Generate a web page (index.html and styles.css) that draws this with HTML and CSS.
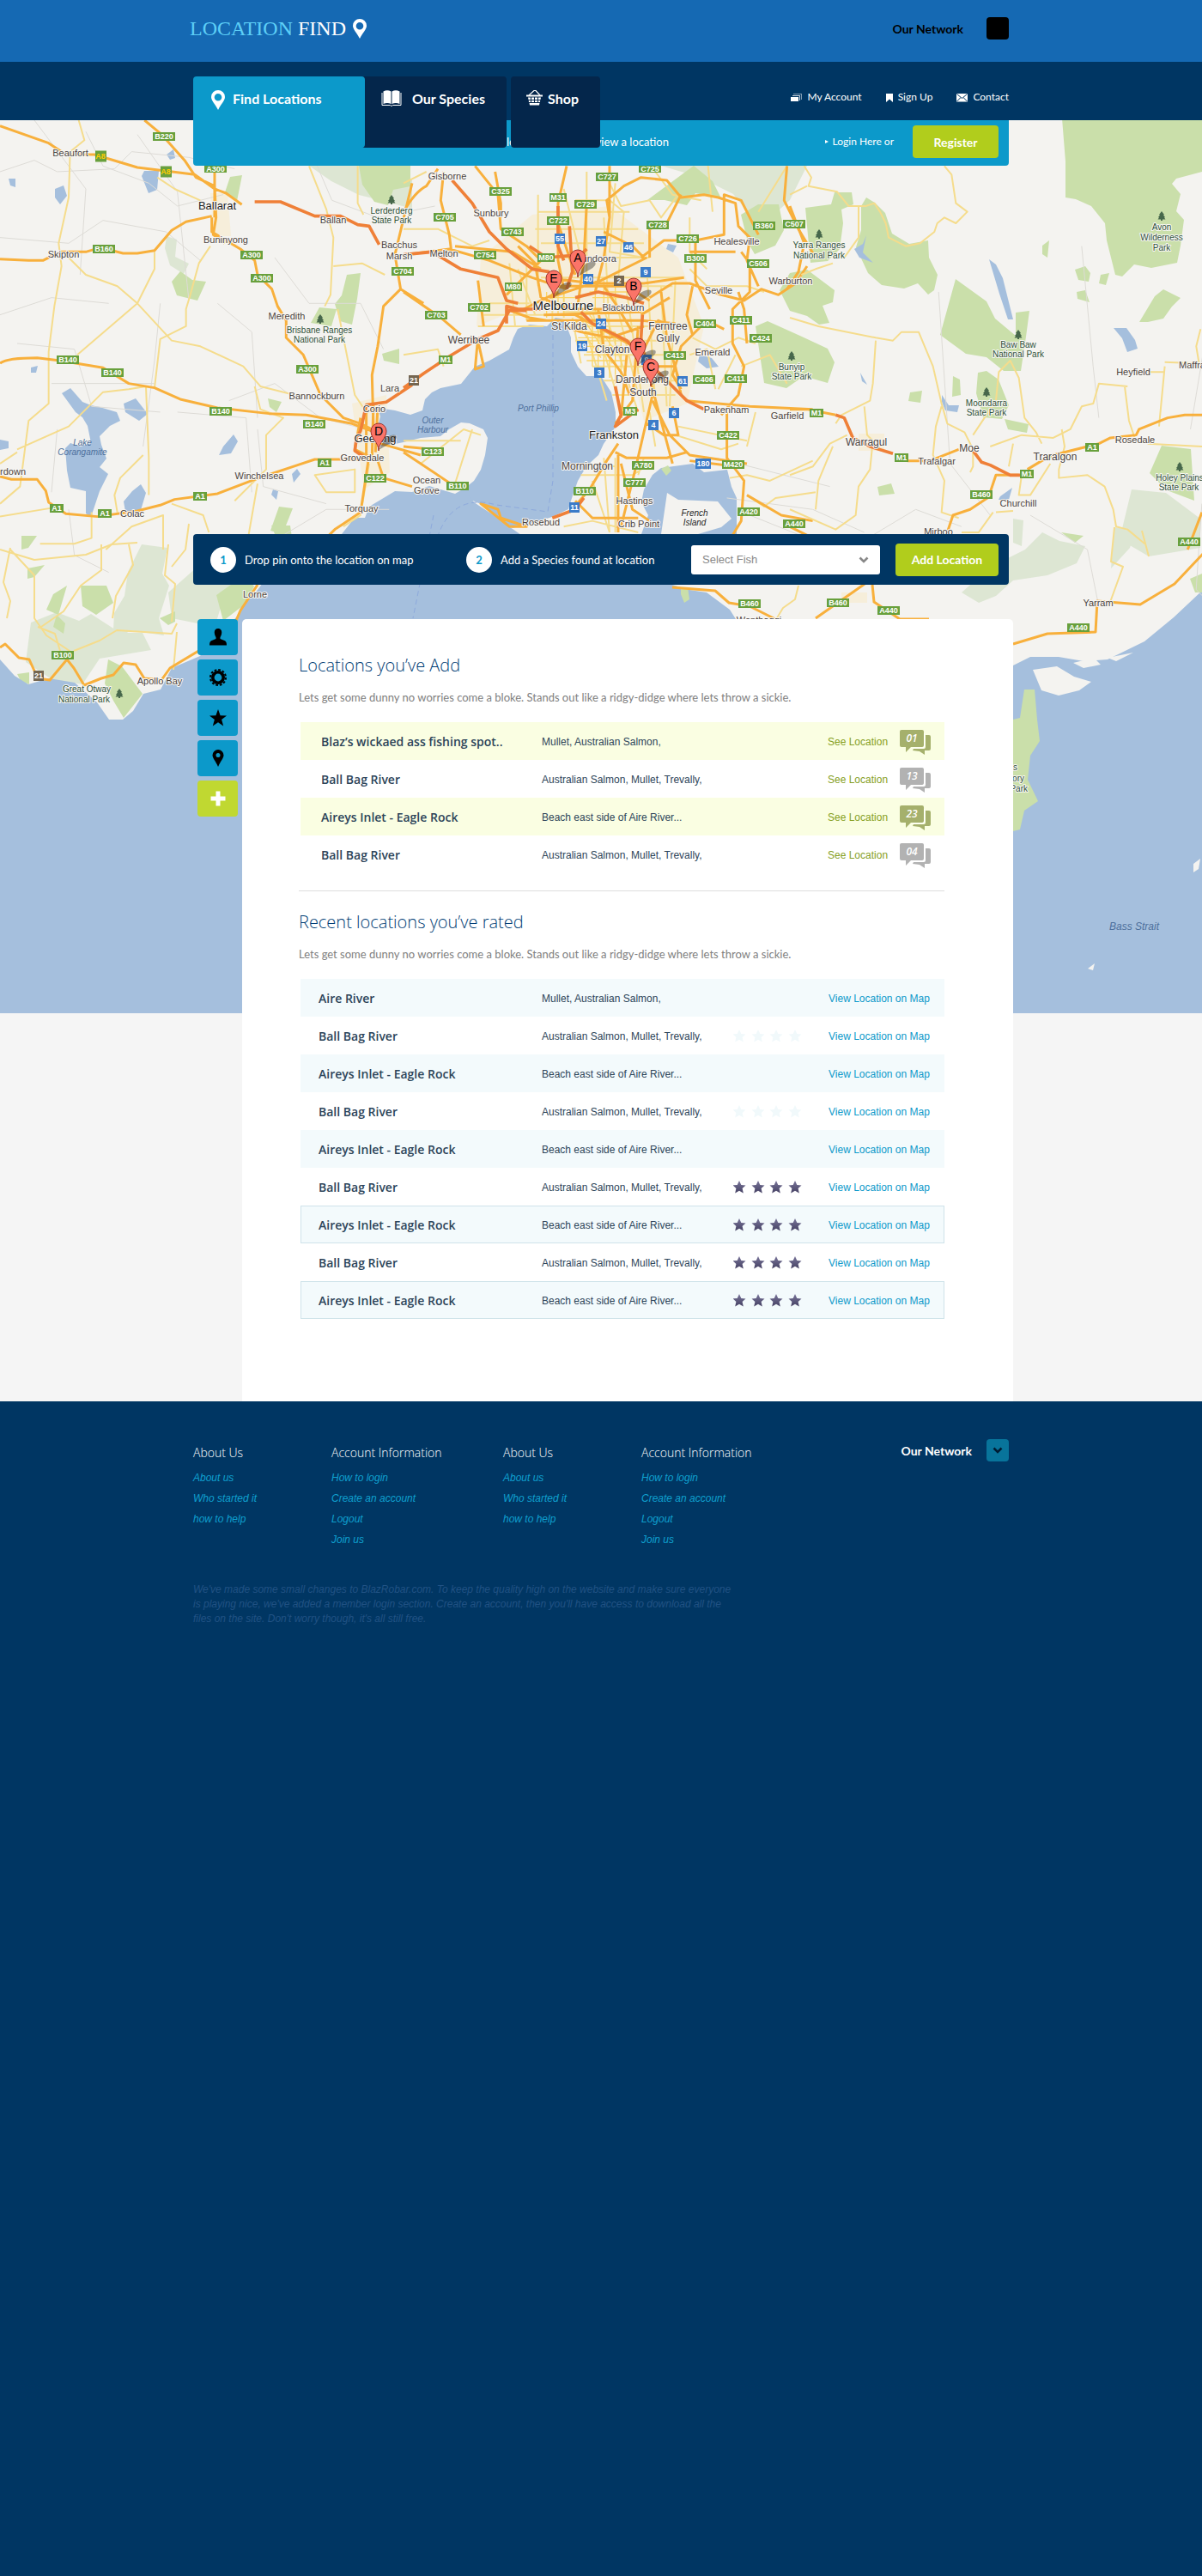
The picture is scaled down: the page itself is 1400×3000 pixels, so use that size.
FILE: index.html
```html
<!DOCTYPE html>
<html lang="en">
<head>
<meta charset="utf-8">
<title>Location Find</title>
<meta name="viewport" content="width=device-width, initial-scale=1">
<link rel="stylesheet" href="styles.css">
</head>
<body>
<svg class="defs" aria-hidden="true">
  <defs>
    <linearGradient id="starFill" x1="0" y1="0" x2="0" y2="1"><stop offset="0" stop-color="#79759a"/><stop offset="1" stop-color="#454163"/></linearGradient>
    <symbol id="pin" viewBox="0 0 16 23"><path fill-rule="evenodd" d="M8 0a8 8 0 0 1 8 8c0 4-4.500 8-8 15C4.500 16 0 12 0 8a8 8 0 0 1 8-8zm0 4a4.300 4.300 0 1 0 0 8.600A4.300 4.300 0 0 0 8 4z"/></symbol>
    <symbol id="star" viewBox="0 0 20 20"><path d="M10 0l2.600 7.200 7.400.3-5.900 4.600 2.100 7.400L10 15.200 3.800 19.500l2.100-7.400L0 7.500l7.400-.3z"/></symbol>
    <symbol id="star4" viewBox="0 0 80 16"><path d="M7 0l2.300 4.900 5.200.5-3.900 3.600 1.200 5.500L7 11.700l-4.800 2.800 1.200-5.500L-.5 5.400l5.200-.5zM29 0l2.300 4.900 5.200.5-3.900 3.600 1.200 5.500-4.800-2.800-4.800 2.800 1.200-5.500-3.900-3.600 5.200-.5zM50 0l2.300 4.900 5.200.5-3.900 3.600 1.200 5.500-4.800-2.800-4.800 2.800 1.200-5.500-3.900-3.600 5.200-.5zM72 0l2.300 4.900 5.200.5-3.900 3.600 1.200 5.500-4.800-2.800-4.800 2.800 1.200-5.500-3.900-3.600 5.200-.5z"/></symbol>
    <symbol id="chat" viewBox="0 0 36 30"><path d="M2 0h24q2 0 2 2v16q0 2-2 2H13l-6 6v-6H2q-2 0-2-2V2q0-2 2-2zM30 6h4q2 0 2 2v14q0 2-2 2h-5v5l-6-4-8-1 1-2h12q2 0 2-2z"/></symbol>
    <symbol id="chevron" viewBox="0 0 12 8"><path d="M1.500 1.500L6 6l4.500-4.500" fill="none" stroke="currentColor" stroke-width="2.600"/></symbol>
    <symbol id="tree" viewBox="0 0 10 12"><path d="M5 0l3 4-1 .5L9 7l-1 .5L9.500 9.500H6V11H4V9.500H.5L2 7.500 1 7l2-2.500L2 4z"/></symbol>
    <symbol id="marker" viewBox="0 0 34 34"><path d="M10 32l8-14q8-5 12-3 3 4-6 9z" fill="#222" opacity=".4"/><path d="M10 33c0-10-9-14-9-23a9 9 0 0 1 18 0c0 9-9 13-9 23z" fill="#fb7468" stroke="#9c332c"/></symbol>
  </defs>
</svg>

<header class="topbar">
  <div class="container topbar-row">
    <a class="logo" href="#"><span class="logo-text"><span class="logo-first">LOCATION</span> FIND</span><svg class="icon-pin"><use href="#pin"/></svg></a>
    <div class="network network-dark"><span>Our Network</span><button class="network-button" type="button" aria-label="Open network list"></button></div>
  </div>
</header>

<div class="navbar">
  <div class="container navbar-row">
    <nav class="tabs" aria-label="Main">
      <a class="tab tab-active" href="#"><svg class="icon-pin"><use href="#pin"/></svg>Find Locations</a>
      <a class="tab tab-species" href="#"><svg class="icon-book" viewBox="0 0 24 19"><path d="M1 3v14.500h9.500l1.500 1 1.500-1H23V3" fill="none" stroke="currentColor"/><path d="M2.500 1.500Q7-1 11.500 1.500V16Q7 14 2.500 16zM12.500 1.500Q17-1 21.500 1.500V16Q17 14 12.500 16z"/></svg>Our Species</a>
      <a class="tab tab-shop" href="#"><svg class="icon-basket" viewBox="0 0 19 18"><path d="M3 6l6-5.500h2L16 6" fill="none" stroke="currentColor" stroke-width="1.200"/><path d="M0 5.500h19v2H0zM2 8.500h3V11H2.500zM6 8.500h3V11H6zM10 8.500h3V11h-3zM14 8.500h3l-.5 2.500H14zM2.700 12H5v2H3zM6 12h3v2H6zM10 12h3v2h-3zM14 12h2.300l-.4 2H14zM3.500 15h12l-.5 2.500H4z"/></svg>Shop</a>
    </nav>
    <ul class="menu">
      <li><a href="#"><svg class="icon-small" viewBox="0 0 13 11"><path d="M3 1h10v7h-1V2H3z" opacity=".5"/><path d="M2 3h9v6h-1V4H2z" opacity=".8"/><path d="M0 5h9v5H0z"/></svg>My Account</a></li>
      <li><a href="#"><svg class="icon-mark" viewBox="0 0 8 11"><path d="M0 1h8v10L4 7.500 0 11z"/></svg>Sign Up</a></li>
      <li><a href="#"><svg class="icon-small" viewBox="0 0 13 11"><path d="M0 1h13v9.500H0z"/><path d="M.5 1.500l6 5 6-5M.5 10L5 5.500M12.500 10L8 5.500" fill="none" stroke="#003663"/></svg>Contact</a></li>
    </ul>
  </div>
</div>

<main class="stage">
<svg class="map" viewBox="0 140 1400 1040" preserveAspectRatio="xMidYMin slice" role="img" aria-label="Map of Melbourne and surrounds">
  <rect class="land" x="0" y="140" width="1400" height="1040"/>
  <g class="pale">
    <path d="M360 193h60l12 18 20-12 28 10v34l-38-10-24-6-32-16zM194 275l12 4-2 20 16 8-6 12-16-10-6-20zM770 193h170l-20 40-22 20-24-2-20-25-40-20zM165 634l30 4-6 30 8 14-12 38 6 20-40-6-20 20 2-40 12-20 4-28zM230 660l60 8-30 30-10 32-50-10-4-30zM36 725l30-12 26 10 14-8 34 22 26 0 10 20-60 10-20 30-36-6-30-20zM1318 570l40 4 40 30v34l-60 10-34-20zM1120 690l34-30 40-20 20-20 20 10 30 6-10 20-34 14-40 6-20 18-20 8zM1298 614l24 4-6 20-22 24zM1180 604l12 2-2 30-10-4z"/>
  </g>
  <g class="park">
    <path d="M1222 140h178v60l-30 8-5 6 10 12-5 20 9 10-4 30-4 20-30 6-20-4-14 14-8-2-10-40-2-20-16-20-18-8-12-2 0-42-4-50zM418 193h60v24l-20 4-6 18-16-4-14-20zM1003 240l6-10 10 6 12 12 8 24 20 12 22-4 1 20 10 20-4 18-7 5-12-13-16 6-26-4-16-14-14-30 6-20zM938 242l30-4 4-14 20 0 2 14-14 6 2 16-4 30-14 14-20 2zM920 318l20-4 32 24-2 14-12 4 8 20-12 2-14-10-20-6-12-24zM880 380l14-6 40 18 30 14 8 16-8 24-28-8-20 14-26-6zM1113 325l36 26 10 20 24 20 0 18 0-45 16-2-4 30 -6 40-20 0-20-16-24-4-30-22zM1139 434l10-2 14 10 12 30-8 16-22-2-8-28zM1110 438l8 4 1 18-10 2zM1252 314l12-4 6 8-2 10-12-2zM1254 340l10-2 5 14-14-4zM1282 320l10-2-4 14-8-2zM1345 345l10-8 20 10-10 10-10 14-18 4-10 0zM1214 286l8-6-2 20-6-4zM1353 519l34 4 4 60-32-12-20-20zM1022 567l16-4 4 12-18 2zM1060 457l14-2-2 14-14-2zM1170 488l28 6-2 10-22-4zM200 328l10-12 14 10 16 2-10 22-24-6zM404 320l16-2-4 30-6 30-14-4-6-20 8-10zM372 358l20 2-6 20-24-4zM445 412l20-6v18l-18-4zM312 464l16 4-6 12-8-6zM325 590l16 2-12 30-14-4zM808 193l22 18 10 20-30-6-10 14-26-6-20 0zM863 250l20-12 24 0 6 30-10 18-24 10-8-14zM25 624h18l-10 14-8 2zM32 662l20-4-12 14-8 2zM62 692l16-10-10 34-14-6zM94 682l30 0 8 20-20 14-16-10zM66 716l10 10-2 12-12-8zM126 768l16 8 24 32-22 28-12-20-10-20zM252 693l34-24 10 14-10 20-26 20zM20 785l14-2 0 14-10-4zM186 720l18-8 0 12-8 4zM1236 620l26 4-10 8zM316 612l22 0 2 14-20-4z"/>
    <path d="M268 206l14-2-6 30-14-10z"/>
  </g>
  <path class="urban" d="M560 300l60-50 90-10 80 60 30 80-20 90-50 20-15-60-60-50-70-20-50 20zM410 470l40-10 4 90-30 20zM1000 505h30v20h-30zM980 690l30 0 0 12-30 0zM245 225l20 0 4 50-20 0z"/>
  <g class="water">
    <path d="M598 393L603 383 617 378 637 380 647 370 657 372 665 393 665 410 673 427 683 438 700 438 712 457 717 480 717 497 703 517 697 530 683 543 673 560 667 577 662 593 643 602 617 610 597 615 577 602 560 587 548 582 530 575 542 568 552 560 560 547 565 530 568 510 563 500 547 493 537 492 523 500 513 508 490 510 470 515 455 518 440 520 438 505 443 485 440 475 460 478 478 483 492 478 495 465 503 457 513 452 537 447 553 427 570 420 593 407z"/>
    <path d="M747 585L750 570 760 553 770 545 807 540 820 550 847 547 852 567 858 580 858 622 747 622 755 600z"/>
    <path d="M0 768L17 787 33 797 57 790 87 795 113 818 127 838 143 838 155 828 167 808 187 803 200 778 233 764 277 717 280 708 300 687 320 660 398 622 413 603 425 603 430 590 460 572 480 573 500 566 530 575 545 575 552 585 575 600 597 616 620 632 700 650 747 622 770 650 783 681 803 687 823 690 850 710 857 721 870 780 1180 775 1200 765 1233 765 1262 770 1290 768 1333 747 1367 719 1400 688V1180H0z"/>
    <path d="M72 458l10-6 14 16 10 4 10 2 20 6 4 10-12 6-12 12 2 10 6 16-8 10 10 8-10 20-10 30-6-4 0-26-18-4-4-20-2-26 6-6 12 4 12-4-4-20-6-10-8-6zM168 199l17 0-2 22-10 4-8-20zM64 220l10-4 4 12-8 10-6-8zM144 470l14-6 14 18-10 8-16-10zM154 572l10-8 6 10-6 20-18 2-2-12zM260 520l12-14 5 8-8 14-14 2zM1152 302l8 6 8 16 12 48-6 0-10-30-6-20zM1312 382l10 14 3 10-12 4-6-16-10-12zM1097 460l8 12 12 0-2 8-14-2-4-10zM995 290l10-6 4-10-4 20 12 12-16-6zM815 413l14 4 8 10-14 2-10-8zM778 284l10 2-4 8-8-4zM350 552l-8 10-2-10 6-6zM10 208l8 0 0 10-6-2zM194 180l8-6 2 10-6 2zM318 570l6 2-2 10-6-6zM1165 578l14-10-4 14-12 0zM1002 434l8 14-6-4zM0 512l10 2 0 8-10 2zM36 428l8-2-2 8-6 0z"/>
  </g>
  <path class="land" d="M777 574l13 8 46 2 16 20-12 10-27 8h-43zM1203 780l28-4 20 12 20 6-14 10-24 6-20-6zM1250 772l24-6 8 8-20 4zM1290 766l30-6-20 10zM1390 1006l8-6-2 12-6 4zM1267 1128l8-6-2 8z"/>
  <path class="park" d="M1180 838l8-2 5-33h12l3 35 3 25-11 17-3 28 12 25-16 11-5 22-8 2zM793 684l8 0 2 14-6 4-4-10zM770 546l8-4 4 6-6 6zM1386 674l14-6v22l-8 0z"/>

  <g transform="scale(.3333)" class="tracks">
    <path d="M0 600l120-40 80 40 200-10 60-60 200 20 160 40M300 460l60 120 160 60 100 80 160-40M0 830l240 20 120-80 220 40 120 100M60 1200l200 20 60 200 240 20M560 1060l-20 200-40 300M620 1440l240 20 20 260M0 1100l180-60 200 20M800 1400l160-60 160 120 160 40M960 900l120 160 180 0 80 160M1100 560l60 140 160 60 200-40M240 1780l20 160 120 60M700 1880l240 20 200-120 220 0M760 1060l120 100 20 300M3280 1020l40 600 140 180M3600 1800l200 120 40 200M4160 1500l60-360 120 60M4200 1760l-20 300 120 120M3000 1900l200-120 160 60M3780 860l40 420 20 180M2500 1600l400 100M2540 1740l300 40 180 80M2620 1800l300 120 200-40M120 420l180 240-20 300M480 470l140 200 40 380M180 1340h360M200 1500l-20 220M900 1500l20 200 220 60"/>
  </g>

  <g transform="translate(0 140) scale(.3333)">
    <path class="minor" d="M275 0l20 70-50 40-5 160-35 160 10 80-25 140-20 160 0 180-70 60-30 230-70 60M240 480l60 60 110 40 70 60 120 130 100 20 150 70 60 70 120 30M540 460v60l-60 120-210 180M550 200l60 40 90 40M735 440l-40 60-30 110-15 50 0 60-90 45-20 170M1080 160l60 150 25 100-5 100-5 100-20 40M1165 510l100-10 80 40M1250 160v130l20 40M1180 660l60 300 40 60M890 930l20 80 80 30-60 60 0 120-110 110M60 1150l180-80 120-120 90-10 60-10 10 250 0 130M500 1170l-80 80-20 60 10 60M600 1340l110 40 20 60M320 1370v90l-60 20-120 0M370 1500l90-80 110-40 0 120M1100 1240l140-20 0 80-100 0zM1290 1200l-30 180-60 40M860 1500l40-230M0 1385l180-30M0 1200l60-40"/>
    <path class="major" d="M0 20l170 60 60 40 100 0 150 45 200 25 70 50 40 15 55 40M505 0l60 50 80 90 40 60 65 30 5 110-10 60 40 30M750 160v180M0 485l100 5 50 0 60-30 90 0 50-15 80 20 50 0 60-10 60-70 50-30 90-20M740 340l0 50 100 60 50 40 10 50 50 50 20 60 30 50 0 60 60 60 60 140 80 80 60 20 80 40M0 850q20-20 130-20l80 10 150 25 90 55 90 15 90 40 130 30 180 20 130 5 160 30 80 30M0 1245l40 10 90 0 30 40 10 40 60 40 110 10 140-20 80-20 50-20 150-20 130-50 150-50 60-20h180M1440 220l-60 250 20 120-60 60-20 140-20 100 5 180M1400 590l80 50M1290 1170l-30 200-60 40-30 20-30 30M1320 1190l20 60 100 30M1330 1130l140 40M1260 1040l-20 110 60 30M1280 1010v160M1305 990l-5 190M1320 1000l-8 160"/>
    <path class="freeway" d="M890 285h90l120 50 90 0 60 30 40 5 35 65M1440 925l-90 60-70 10-20 90-15 30-5 40 30 20"/>
  </g>
  <g transform="translate(470 180) scale(.3333)">
    <path class="minor" d="M0 260h120l120 60 60-20M0 700l120-20 20 60M470 140v320M560 120l60 240M600 160h120l50 40-20 240M640 60v400M700 220l20 400M740 100l-20 240 120 20M470 200h320M460 260h360M480 310h360M500 360h360M480 430h500M520 460h420M560 550h300M580 600h330M600 650h340M630 700h330M660 740h260M700 790h260M730 840h220M620 560l90 300M660 550l100 340M700 540l120 360M740 500l80 340M780 480l60 420M850 400l30 470M900 460l20 420M950 440l-20 440M590 570l30 160M560 460v110M520 460v120M400 400l60 160M430 380v200M370 380l20 220M260 600h230M280 560h220M300 520h140M960 950l240 50M950 980l160 50 60-20M1010 640l80 40 80-40 60 20M1000 700l60-20 30 140M1160 700l-60 120M1000 400l60 60 140 0 60 20M1060 400l-60-60 0-120M720 100l40 80 100-20 40 60 60-80M1240 200l100-160M1060 0l20 200M620 1080l120 10M620 1120h180l60-40M700 1060l20 260M740 1060v260M660 1140l60 180M560 1300l100-20 160 40M840 1060l-20 60M1230 900l-30 120M0 1000l200 0M60 1080l150-120 60 20M180 1150l60-190M1140 1130l60-10 80 20 150-70M1200 1190l60 40 40-30 140-20M880 1020l-20-120M1180 740l100-40 60 100M880 60l60 80 100 20M0 100l80-40"/>
    <path class="urbanroads" d="M600 580l90 130M620 560l110 170M650 560l100 140M610 620h130M610 640h150M620 670h140M640 690h140M640 720h140M500 480v90M480 500h120M500 520h120M500 540h100M540 470v90M560 480v80M660 600v140M680 580v170M700 590v170M720 600v180M740 620v180M760 640v150M650 480h140M660 500h140M560 500h60M700 440v110M740 440v110M670 440v110"/>
    <path class="major" d="M0 200q40-70 80-90l40-60M140 60l-10 100 30 120 10 80M320 60l20 110 0 50M250 40l80 100 10 120 90 60 40 40M570 40l-30 130 0 200 20 100M720 220l-10-60 60-50 60-30 90 10 50 60 80-10 50 10 60 20 10 80 40 40-10 80 40 90M720 40v180l-20 140-30 120M640 170l-10 200-20 150M400 320l60 60 20 120M0 350l160-20 140 40 150 60 120 40M260 440l20 160M0 480l130 90 70 60M480 400l-100-60-200-20M850 360l-160 80-180 60M860 500l80-50 60 0 110 40 80 20 60-40 60 20 60-40 40-60M860 360l0-100 60-20 50-100M830 360l80-60 110 0 100-20 0-140 60 20 60 120M1020 300v140l30 60 20 40M1340 40l-10 120 50 100 60 100M1000 340l160 0M1180 340l30 40 0 100-60 60 0 120 40 80-20 100-60 70M1170 480l20 60 10 120M430 580l400 0 120 10M490 560l340-10M600 560l240 130 20 50M830 560l100-60M520 460h260l80 50M940 600l-50-20-50 100M1010 460l-20 100 20 70-40 40-30 100 30 50M1000 640l60-60 60 30M860 740h90l20 100M860 780l80 300M870 840l-60 260-50 200M680 540l20 140 60 80 30 80M740 1040l40 20 140 0 70-20M940 880l20 100-50 0-60-40M870 860l60 120 70 70 200 30M1130 900l0 160 60 80-10 140-30 50M1200 1190l120 70 110 20M990 860l220 20M1210 880l220 10M1000 1070l160 20M580 1250l70-80 60-100 40-60M750 1040v280M600 1210l60 60h160M760 1080l40 160 60 40M0 1040l180 120M0 1020l100 10M270 1220l60 20 10 30 90 30-60 0zM360 540l80 30 60 10M260 640l-10 110 30-10-20-90M360 490l60-60 60-60M700 270l100 50 40 40M700 460l40 60 60 100M780 700l-20 220M820 600l-20 260-60 80M900 480l20 160 40 140M560 600l60 20 100 20 120-40M500 430l160 20 180 0 140-20M480 500l100 40 120 0M420 540l120-60M540 240l60 180"/>
    <path class="freeway" d="M170 90l70 80 60 100 60 60 90 70 60 10M0 350l100-10 100 60 130 30 30 80 40 10M0 815l70-50 90-60 100-60 70-30 40-70 60 0M440 320l60 40 120-10 20-20M540 180l0 140 20 50M580 250l10 160-20 60M600 500l80-20 100 20 60 20M620 550l40 40 60 30 60 30 80 80 60 60 60 60M835 560l-5 80 10 60M740 810l20 100-20 40 80-60M940 810l50 50 60 30M520 1270l80-30 30-40M360 590v-60l40 10 80 0"/>
  </g>
  <g transform="translate(920 140) scale(.3333)">
    <path class="minor" d="M50 160l25 40-10 30 100 20 40 50 60 0 30-10 20 30 20 40 10 50 60 30 50-10 50-40 10-30 25-20 40 20 40-40-40-30-15-100-25-30M0 260l60-30M190 480l50-70 0-110M40 540l50-20 60-20M0 690l100 30 200 40 60 10 30-30 60 0 50 120 30 130 20 70 60 30 30 60 0 60-10 20M300 770l-10 150-10 60-100 50-20 30M260 1000l10 100 20 20-10 100-40 60-10 100-70 50-160-70M0 1240l80-30 60-80 60-30M150 1140l-50 120-10 100M530 1000l-20 70-10 100 40 90-10 110 60 20M640 1100l80-120 10-100 40-40 30 60 20 140 40 50 20 40M1435 730l-15 60 10 60M1170 930l15 120 20 60M1310 860l-20 210M1250 880h60M1180 930l-100-10-20 70-40 10-40 80-60 30-110-10-110 40M950 1080l10 60-20 80 0 30 100-10 60 40 30 80 10 60 40 10 60 50M910 1200l-70 110-40 0 10-70M720 1370l60-5M780 1130l-15 80M1250 1130l190 10M1430 850l-120-5M600 1440h60l50-70"/>
    <path class="major" d="M0 300l50 130-20 100-40 60M0 1010h60l100 20M410 1190l80 0 100-40M830 1220l50-30 40-20 160-40 40-20 90-10 10-20 100-40 60-10h70M800 1240l-80 0-20 60-10 20-60 40-60 20-20 60M1440 1370l-50 130M0 1420l60 30"/>
    <path class="freeway" d="M160 1030l30 10 30 70 60 30 80 25M640 1155l30 40 30 10 70 35 50 0"/>
  </g>
  <path class="minor" d="M0 640l40 12 60-6 30-12 30-2M12 638l-8 40 8 22-4 20M12 640l28 30 0 50 14 20 30 20M118 634l0 30-24 18-20 30-26 18M150 634l5 24-20 36-4 26M196 634l-4 36 12 10-4 44M44 730l20 8 6 20M86 758l30-12 20-12 64 4 6-12M206 736l-4 44M1298 614l-4 40 14 6-16 44M1330 618l8 30M930 682l-4 16-14 10-12 20M200 660l16-20 4-30"/>
  <path class="major" d="M0 754l6-4 16 16 12 2 10 22 14 2 20-24 8 10 12 20 20-8 14-4 12-14 14 2 10 16 20 2 10-14 40-24M300 681l-20 30-6 14M783 684l50 4 16 14 24 4 40 20M950 720l60-42M1016 681l2 20 30 20 34 0M1180 750l40-12 56-2 2-36 50 4 40-24 34-36"/>
  <g class="ferry"><path d="M644 380v180l-6 36-60-8q-50-14-68 36M505 600l-24 120"/></g>

  <path class="shields" d="M178 159h26M238 196h26M108 290h26M280 297h26M292 324h26M456 316h26M66 419h26M118 434h26M244 479h26M353 494h26M345 430h26M370 539h16M424 557h26M225 578h16M58 592h16M114 598h16M570 223h26M505 253h26M640 230h20M694 206h26M744 196h26M669 238h26M584 270h26M637 257h26M753 262h26M788 278h26M797 301h26M877 263h26M912 261h26M870 307h26M552 297h26M626 300h20M588 334h20M545 358h26M495 367h26M511 419h16M808 377h26M850 373h26M873 394h26M773 414h26M807 442h26M844 441h26M726 479h16M835 507h26M841 541h26M736 542h26M726 562h26M668 572h26M491 526h26M520 566h26M859 596h26M912 610h26M943 481h16M1042 533h16M1264 521h16M1188 552h16M1130 576h26M1372 631h26M860 703h26M963 702h26M1022 711h26M1243 731h26M60 763h26"/>
  <path class="gold-shields" d="M111 182h13M187 200h13"/>
  <g class="shield-text">
    <text x="191" y="162">B220</text><text x="251" y="200">A300</text><text x="121" y="293">B160</text><text x="293" y="300">A300</text><text x="305" y="327">A300</text><text x="469" y="319">C704</text><text x="79" y="422">B140</text><text x="131" y="437">B140</text><text x="257" y="482">B140</text><text x="366" y="497">B140</text><text x="358" y="433">A300</text><text x="378" y="542">A1</text><text x="437" y="560">C122</text><text x="233" y="581">A1</text><text x="66" y="595">A1</text><text x="122" y="601">A1</text>
    <text x="583" y="226">C325</text><text x="518" y="256">C705</text><text x="650" y="233">M31</text><text x="707" y="209">C727</text><text x="757" y="200">C725</text><text x="682" y="241">C729</text><text x="597" y="273">C743</text><text x="650" y="260">C722</text><text x="766" y="265">C728</text><text x="801" y="281">C726</text><text x="810" y="304">B300</text><text x="890" y="266">B360</text><text x="925" y="264">C507</text><text x="883" y="310">C506</text><text x="565" y="300">C754</text><text x="636" y="303">M80</text><text x="598" y="337">M80</text><text x="558" y="361">C702</text><text x="508" y="370">C703</text><text x="519" y="422">M1</text><text x="821" y="380">C404</text><text x="863" y="376">C411</text><text x="886" y="397">C424</text><text x="786" y="417">C413</text><text x="820" y="445">C406</text><text x="857" y="444">C411</text><text x="734" y="482">M3</text><text x="848" y="510">C422</text><text x="854" y="544">M420</text><text x="749" y="545">A780</text><text x="739" y="565">C777</text><text x="681" y="575">B110</text><text x="504" y="529">C123</text><text x="533" y="569">B110</text><text x="872" y="599">A420</text><text x="925" y="613">A440</text>
    <text x="951" y="484">M1</text><text x="1050" y="536">M1</text><text x="1272" y="524">A1</text><text x="1196" y="555">M1</text><text x="1143" y="579">B460</text><text x="1385" y="634">A440</text><text x="873" y="706">B460</text><text x="976" y="705">B460</text><text x="1035" y="714">A440</text><text x="1256" y="734">A440</text><text x="73" y="766">B100</text><text class="gold" x="117" y="185">A8</text><text class="gold" x="193" y="203">A8</text>
  </g>
  <path class="routes" d="M646 278h12M694 281h12M726 288h12M746 317h12M679 325h12M694 377h12M672 403h12M692 434h12M789 444h12M779 481h12M755 495h12M810 540h18M663 591h12M747 419h12"/>
  <path class="alt-routes" d="M715 327h12M476 443h12M39 787h12"/>
  <g class="shield-text">
    <text x="652" y="281">55</text><text x="700" y="284">27</text><text x="732" y="291">46</text><text x="752" y="320">9</text><text x="685" y="328">40</text><text x="700" y="380">24</text><text x="678" y="406">19</text><text x="698" y="437">3</text><text x="795" y="447">61</text><text x="785" y="484">6</text><text x="761" y="498">4</text><text x="819" y="543">180</text><text x="669" y="594">11</text><text x="753" y="422">9</text><text x="721" y="330">2</text><text x="482" y="446">21</text><text x="45" y="790">21</text>
  </g>

  <g class="town">
    <text x="82" y="182">Beaufort</text><text class="city" x="253" y="244">Ballarat</text><text x="388" y="260">Ballan</text><text x="263" y="283">Buninyong</text><text x="74" y="300">Skipton</text><text x="334" y="372">Meredith</text><text x="369" y="465">Bannockburn</text><text x="454" y="456">Lara</text><text x="436" y="480">Corio</text><text class="city" x="437" y="515">Geelong</text><text x="422" y="537">Grovedale</text><text x="302" y="558">Winchelsea</text><text x="421" y="596">Torquay</text><text x="154" y="602">Colac</text><text class="end" x="30" y="553">Camperdown</text><text x="465" y="289">Bacchus</text><text x="465" y="302">Marsh</text>
    <text x="521" y="209">Gisborne</text><text x="572" y="252">Sunbury</text><text x="517" y="299">Melton</text><text class="big" x="546" y="400">Werribee</text><text class="capital" x="656" y="361">Melbourne</text><text class="big" x="663" y="384">St Kilda</text><text class="end" x="718" y="305">Bundoora</text><text x="726" y="362">Blackburn</text><text x="858" y="285">Healesville</text><text x="921" y="331">Warburton</text><text x="837" y="342">Seville</text><text class="big" x="778" y="384">Ferntree</text><text class="big" x="778" y="398">Gully</text><text x="830" y="414">Emerald</text><text class="big" x="713" y="411">Clayton</text><text class="big" x="748" y="446">Dandenong</text><text class="big" x="749" y="461">South</text><text x="846" y="481">Pakenham</text><text x="917" y="488">Garfield</text><text class="city" x="715" y="511">Frankston</text><text class="big" x="684" y="547">Mornington</text><text x="739" y="587">Hastings</text><text x="744" y="614">Crib Point</text><text x="630" y="612">Rosebud</text><text x="497" y="563">Ocean</text><text x="497" y="575">Grove</text>
    <text x="1320" y="437">Heyfield</text><text class="start" x="1373" y="429">Maffra</text><text class="big" x="1009" y="519">Warragul</text><text class="big" x="1129" y="526">Moe</text><text x="1091" y="541">Trafalgar</text><text class="big" x="1229" y="536">Traralgon</text><text x="1322" y="516">Rosedale</text><text x="1186" y="590">Churchill</text><text x="1093" y="623">Mirboo</text><text x="297" y="696">Lorne</text><text x="884" y="726">Wonthaggi</text><text x="1279" y="706">Yarram</text><text x="186" y="797">Apollo Bay</text>
    <g class="island"><text x="809" y="601">French</text><text x="809" y="612">Island</text></g>
  </g>
  <g class="park-name">
    <text x="456" y="249">Lerderderg</text><text x="456" y="260">State Park</text><text x="372" y="388">Brisbane Ranges</text><text x="372" y="399">National Park</text><text x="954" y="289">Yarra Ranges</text><text x="954" y="301">National Park</text><text x="922" y="431">Bunyip</text><text x="922" y="442">State Park</text><text x="1186" y="405">Baw Baw</text><text x="1186" y="416">National Park</text><text x="1353" y="268">Avon</text><text x="1353" y="280">Wilderness</text><text x="1353" y="292">Park</text><text x="1149" y="473">Moondarra</text><text x="1149" y="484">State Park</text><text x="1374" y="560">Holey Plains</text><text x="1373" y="571">State Park</text><text x="101" y="806">Great Otway</text><text x="98" y="818">National Park</text><text class="end" x="1185" y="897">Wilsons</text><text class="end" x="1193" y="910">Promontory</text><text class="end" x="1197" y="922">National Park</text>
  </g>
  <g class="trees"><use href="#tree" x="451" y="227" width="10" height="12"/><use href="#tree" x="368" y="366" width="10" height="12"/><use href="#tree" x="949" y="267" width="10" height="12"/><use href="#tree" x="917" y="409" width="10" height="12"/><use href="#tree" x="1181" y="384" width="10" height="12"/><use href="#tree" x="1348" y="246" width="10" height="12"/><use href="#tree" x="1144" y="451" width="10" height="12"/><use href="#tree" x="1369" y="538" width="10" height="12"/><use href="#tree" x="134" y="802" width="10" height="12"/></g>
  <g class="sea-name"><text x="96" y="519">Lake</text><text x="96" y="530">Corangamite</text><text x="504" y="493">Outer</text><text x="504" y="504">Harbour</text><text x="627" y="479">Port Phillip</text><text class="strait" x="1321" y="1083">Bass Strait</text></g>
  <g class="markers">
    <use href="#marker" x="663" y="290" width="34" height="34"/><use href="#marker" x="635" y="314" width="34" height="34"/><use href="#marker" x="728" y="323" width="34" height="34"/><use href="#marker" x="733" y="393" width="34" height="34"/><use href="#marker" x="748" y="417" width="34" height="34"/><use href="#marker" x="431" y="492" width="34" height="34"/>
    <text x="673" y="305">A</text><text x="645" y="329">E</text><text x="738" y="338">B</text><text x="743" y="408">F</text><text x="758" y="432">C</text><text x="441" y="507">D</text>
  </g>
</svg>

  <section class="container loginbar">
    <p class="loginbar-text">Add a location, rate it or view a location</p>
    <a class="login" href="#">Login Here or</a>
    <button class="button register" type="button">Register</button>
  </section>

  <form class="container steps">
    <p class="step step-one"><span class="step-number">1</span>Drop pin onto the location on map</p>
    <p class="step step-two"><span class="step-number">2</span>Add a Species found at location</p>
    <div class="select-box"><select aria-label="Fish species"><option>Select Fish</option></select><svg class="select-arrow"><use href="#chevron"/></svg></div>
    <button class="button add" type="button">Add Location</button>
  </form>

  <div class="content">
    <nav class="side" aria-label="Account">
      <a href="#" aria-label="Profile"><svg viewBox="0 0 20 20"><path d="M10 0c3 0 4.500 2 4.200 5-.2 2.500-1 4-1.700 5v2l5.500 2.200q2 1 2 5.300H0q0-4.300 2-5.300L7.500 12v-2c-.7-1-1.500-2.500-1.700-5C5.500 2 7 0 10 0z"/></svg></a>
      <a href="#" aria-label="Settings"><svg viewBox="0 0 20 20"><circle cx="10" cy="10" r="6.200" fill="none" stroke="#000" stroke-width="3.600"/><circle cx="10" cy="10" r="9" fill="none" stroke="#000" stroke-width="2" stroke-dasharray="2.700 2.010"/></svg></a>
      <a href="#" aria-label="Favourites"><svg viewBox="0 0 20 20"><use href="#star"/></svg></a>
      <a href="#" aria-label="Locations"><svg viewBox="0 0 20 20"><path fill-rule="evenodd" d="M10 0a6.500 6.500 0 0 1 6.500 6.500C16.500 10 13 13 10 20 7 13 3.500 10 3.500 6.500A6.500 6.500 0 0 1 10 0zm0 4a2.500 2.500 0 1 0 0 5 2.500 2.500 0 0 0 0-5z"/></svg></a>
      <a class="side-add" href="#" aria-label="Add"><svg viewBox="0 0 20 20"><path d="M7.500 1.500h5v6h6v5h-6v6h-5v-6h-6v-5h6z"/></svg></a>
    </nav>
    <div class="panel">
      <section>
        <h2>Locations you’ve Add</h2>
        <p class="intro">Lets get some dunny no worries come a bloke. Stands out like a ridgy-didge where lets throw a sickie.</p>
        <table class="added">
          <colgroup><col class="col-name"><col class="col-fish-wide"><col class="col-see"><col></colgroup>
          <tbody>
          <tr><th scope="row">Blaz’s wickaed ass fishing spot..</th><td>Mullet, Australian Salmon,</td><td><a href="#">See Location</a></td><td><svg class="chat chat-olive" viewBox="0 0 36 30"><use href="#chat"/><path class="chat-gap" d="M28.500 4v15q0 2-2 2H15"/><text x="14" y="14">01</text></svg></td></tr>
          <tr><th scope="row">Ball Bag River</th><td>Australian Salmon, Mullet, Trevally,</td><td><a href="#">See Location</a></td><td><svg class="chat" viewBox="0 0 36 30"><use href="#chat"/><path class="chat-gap" d="M28.500 4v15q0 2-2 2H15"/><text x="14" y="14">13</text></svg></td></tr>
          <tr><th scope="row">Aireys Inlet - Eagle Rock</th><td>Beach east side of Aire River...</td><td><a href="#">See Location</a></td><td><svg class="chat chat-olive" viewBox="0 0 36 30"><use href="#chat"/><path class="chat-gap" d="M28.500 4v15q0 2-2 2H15"/><text x="14" y="14">23</text></svg></td></tr>
          <tr><th scope="row">Ball Bag River</th><td>Australian Salmon, Mullet, Trevally,</td><td><a href="#">See Location</a></td><td><svg class="chat" viewBox="0 0 36 30"><use href="#chat"/><path class="chat-gap" d="M28.500 4v15q0 2-2 2H15"/><text x="14" y="14">04</text></svg></td></tr>
          </tbody>
        </table>
      </section>
      <section class="rated-section">
        <h2>Recent locations you’ve rated</h2>
        <p class="intro">Lets get some dunny no worries come a bloke. Stands out like a ridgy-didge where lets throw a sickie.</p>
        <table class="rated">
          <colgroup><col class="col-name"><col class="col-fish"><col class="col-stars"><col></colgroup>
          <tbody>
          <tr><th scope="row">Aire River</th><td>Mullet, Australian Salmon,</td><td></td><td><a href="#">View Location on Map</a></td></tr>
          <tr><th scope="row">Ball Bag River</th><td>Australian Salmon, Mullet, Trevally,</td><td><svg class="stars stars-empty"><use href="#star4"/></svg></td><td><a href="#">View Location on Map</a></td></tr>
          <tr><th scope="row">Aireys Inlet - Eagle Rock</th><td>Beach east side of Aire River...</td><td></td><td><a href="#">View Location on Map</a></td></tr>
          <tr><th scope="row">Ball Bag River</th><td>Australian Salmon, Mullet, Trevally,</td><td><svg class="stars stars-empty"><use href="#star4"/></svg></td><td><a href="#">View Location on Map</a></td></tr>
          <tr><th scope="row">Aireys Inlet - Eagle Rock</th><td>Beach east side of Aire River...</td><td></td><td><a href="#">View Location on Map</a></td></tr>
          <tr><th scope="row">Ball Bag River</th><td>Australian Salmon, Mullet, Trevally,</td><td><svg class="stars"><use href="#star4"/></svg></td><td><a href="#">View Location on Map</a></td></tr>
          <tr class="outlined"><th scope="row">Aireys Inlet - Eagle Rock</th><td>Beach east side of Aire River...</td><td><svg class="stars"><use href="#star4"/></svg></td><td><a href="#">View Location on Map</a></td></tr>
          <tr><th scope="row">Ball Bag River</th><td>Australian Salmon, Mullet, Trevally,</td><td><svg class="stars"><use href="#star4"/></svg></td><td><a href="#">View Location on Map</a></td></tr>
          <tr class="outlined"><th scope="row">Aireys Inlet - Eagle Rock</th><td>Beach east side of Aire River...</td><td><svg class="stars"><use href="#star4"/></svg></td><td><a href="#">View Location on Map</a></td></tr>
          </tbody>
        </table>
      </section>
    </div>
  </div>
</main>

<footer class="footer">
  <div class="container">
    <div class="footer-row">
      <div class="footer-columns">
        <section><h3>About Us</h3><ul><li><a href="#">About us</a></li><li><a href="#">Who started it</a></li><li><a href="#">how to help</a></li></ul></section>
        <section><h3>Account Information</h3><ul><li><a href="#">How to login</a></li><li><a href="#">Create an account</a></li><li><a href="#">Logout</a></li><li><a href="#">Join us</a></li></ul></section>
        <section><h3>About Us</h3><ul><li><a href="#">About us</a></li><li><a href="#">Who started it</a></li><li><a href="#">how to help</a></li></ul></section>
        <section><h3>Account Information</h3><ul><li><a href="#">How to login</a></li><li><a href="#">Create an account</a></li><li><a href="#">Logout</a></li><li><a href="#">Join us</a></li></ul></section>
      </div>
      <div class="network network-light"><span>Our Network</span><button class="network-button" type="button" aria-label="Open network list"><svg><use href="#chevron"/></svg></button></div>
    </div>
    <p class="footnote">We've made some small changes to BlazRobar.com. To keep the quality high on the website and make sure everyone is playing nice, we've added a member login section. Create an account, then you'll have access to download all the files on the site. Don't worry though, it's all still free.</p>
  </div>
</footer>
</body>
</html>
```
FILE: styles.css
```css
* { box-sizing: border-box; }
body { margin: 0; background: #003663; font-family: Lato, "Open Sans", sans-serif; font-size: 13px; color: #fff; }
h2, h3, p, ul { margin: 0; padding: 0; font-weight: 400; }
ul { list-style: none; }
a { color: inherit; text-decoration: none; }
button { border: 0; padding: 0; font-family: inherit; cursor: pointer; }
svg { display: block; fill: currentColor; }
.defs { position: absolute; width: 0; height: 0; }
.container { width: 100%; max-width: 950px; margin: 0 auto; }

/* Top bar */
.topbar { background: #1569b3; }
.topbar-row { display: flex; justify-content: space-between; align-items: center; height: 72px; padding-bottom: 6px; }
.logo { display: flex; align-items: center; gap: 8px; margin-left: -4px; font: 24px/30px "Liberation Serif", serif; }
.logo-first { color: #5dcff7; }
.icon-pin { width: 16px; height: 23px; }
.network { display: flex; align-items: center; font-size: 14px; font-weight: 700; }
.network-button { width: 26px; height: 26px; border-radius: 4px; display: grid; place-items: center; }
.network-dark { color: #000; gap: 27px; }
.network-dark .network-button { background: #000; }

/* Navigation */
.navbar { background: #003663; position: relative; z-index: 2; }
.navbar-row { display: flex; justify-content: space-between; height: 68px; }
.tabs { display: flex; padding-top: 17px; font-size: 16px; font-weight: 700; }
.tab { display: flex; align-items: flex-start; height: 83px; padding-top: 16px; line-height: 20px; background: #04264b; border-radius: 4px; white-space: nowrap; }
.tab-active { width: 200px; padding-left: 21px; gap: 9px; background: #0c99ca; position: relative; z-index: 1; }
.tab-species { width: 169px; margin-left: -4px; padding-left: 23px; gap: 12px; }
.tab-shop { width: 104px; margin-left: 5px; padding-left: 18px; gap: 6px; }
.icon-book { width: 24px; height: 19px; }
.icon-basket { width: 19px; height: 18px; }
.menu { display: flex; gap: 28px; padding-top: 33px; font-size: 12px; line-height: 16px; }
.menu a { display: flex; align-items: center; gap: 6px; }
.icon-small { width: 13px; height: 11px; }
.icon-mark { width: 8px; height: 11px; }

/* Map */
.stage { position: relative; background: #f5f5f5; }
.map { position: absolute; top: 0; left: 0; width: 100%; height: 1040px; font-family: "Liberation Sans", sans-serif; }
.land { fill: #f4f3f0; }
.pale { fill: #dde6d3; }
.park { fill: #cadfaa; }
.urban { fill: #f6ecd4; opacity: .8; }
.water { fill: #a5bfdd; }
.map .tracks, .minor, .major, .freeway, .urbanroads, .ferry { fill: none; stroke-linejoin: round; }
.tracks { stroke: #dddbd6; stroke-width: 3; }
.minor { stroke: #f5dc8c; stroke-width: 6; }
.urbanroads { stroke: #fbd566; stroke-width: 4; }
.major { stroke: #f8b03c; stroke-width: 9; }
.freeway { stroke: #ef8038; stroke-width: 11; }
.map > .minor { stroke-width: 2; }
.map > .major { stroke-width: 3; }
.ferry { stroke: #8da9dc; stroke-width: 1; stroke-dasharray: 6 4; }
.shields { stroke: #68a03c; stroke-width: 10; }
.gold-shields { stroke: #68a03c; stroke-width: 13; }
.routes { stroke: #3b7bc8; stroke-width: 12; }
.alt-routes { stroke: #756651; stroke-width: 12; }
.map text { text-anchor: middle; }
.shield-text { fill: #fff; font-size: 9px; font-weight: 700; }
.shield-text .gold { fill: #fc0; }
.town text, .park-name text { paint-order: stroke; stroke: #f8f7f4; stroke-width: 2; stroke-linejoin: round; }
.town { font-size: 11px; fill: #4c443f; }
.town .big { font-size: 12px; }
.town .city { font-size: 13px; fill: #222; }
.town .capital { font-size: 15px; fill: #222; }
.park-name { font-size: 10px; fill: #2e5038; }
.island { font-size: 10px; font-style: italic; fill: #222; }
.sea-name { font-size: 10px; font-style: italic; fill: #4d6f9c; }
.sea-name .strait { font-size: 12px; }
.trees { fill: #47684b; }
.markers { font-size: 14px; fill: #000; }
.map .end { text-anchor: end; }
.map .start { text-anchor: start; }

/* Bars over the map */
.loginbar { position: relative; display: flex; align-items: flex-start; height: 53px; padding: 6px 12px 0 0; background: #0c99ca; border-radius: 0 0 4px 4px; }
.loginbar-text { width: 554px; text-align: right; line-height: 38px; }
.login { margin-left: auto; margin-right: 22px; font-size: 12px; line-height: 38px; }
.login::before { content: ""; display: inline-block; margin-right: 5px; border: 2px solid transparent; border-left: 4px solid #fff; border-right: 0; vertical-align: 2px; }
.button { height: 38px; border-radius: 4px; background: #b1cd1c; color: #fff; font-size: 14px; font-weight: 700; }
.register { width: 100px; }
.add { width: 120px; margin-left: 18px; }
.steps { position: relative; display: flex; align-items: center; height: 59px; margin-top: 429px; padding: 0 12px 0 20px; background: #003663; border-radius: 4px; }
.step { display: flex; align-items: center; gap: 10px; white-space: nowrap; }
.step-one { width: 298px; }
.step-number { display: grid; place-items: center; width: 30px; height: 30px; border-radius: 50%; background: #fff; color: #0c99ca; font-weight: 700; }
.select-box { position: relative; width: 220px; margin-left: auto; }
.select-box select { display: block; width: 100%; height: 34px; padding: 0 13px; border: 0; border-radius: 3px; background: #fff; color: #888; font: 13px "Liberation Sans", sans-serif; appearance: none; }
.select-arrow { position: absolute; right: 13px; top: 13px; width: 12px; height: 8px; color: #888; pointer-events: none; }

/* Content */
.content { position: relative; display: flex; gap: 5px; width: 100%; max-width: 960px; margin: 40px auto 0; padding-left: 10px; }
.side { display: flex; flex-direction: column; gap: 5px; width: 47px; flex: none; color: #000; }
.side a { display: grid; place-items: center; height: 42px; border-radius: 4px; background: #0c99ca; }
.side svg { width: 20px; height: 20px; }
.side .side-add { background: #c0d831; color: #fff; }
.panel { flex: 1; padding: 41px 80px 96px 66px; background: #fff; border-radius: 5px 5px 0 0; }
h2 { color: #003d75; font: 300 20px/26px "Open Sans", sans-serif; }
.intro { margin-top: 15px; color: #808080; line-height: 18px; }
.rated-section { margin-top: 20px; border-top: 1px solid #ddd; padding-top: 23px; }
table { width: calc(100% - 2px); margin: 20px 0 0 2px; border-collapse: collapse; table-layout: fixed; font: 12px/16px "Liberation Sans", sans-serif; color: #2c4459; }
th, td { height: 44px; padding: 2px 0 0; text-align: left; white-space: nowrap; }
th { font: 600 14px/18px "Open Sans", sans-serif; }
.col-name { width: 281px; }
.col-fish-wide { width: 333px; }
.col-see { width: 84px; }
.col-fish { width: 223px; }
.col-stars { width: 111px; }
.added th { padding-left: 24px; }
.added td:last-child { padding-top: 4px; }
.added tr:nth-child(odd) { background: #fafee2; }
.added a { color: #86a01f; }
.rated th { padding-left: 21px; }
.rated tr:nth-child(odd) { background: #f3fafc; }
.rated a { color: #0c99ca; }
.rated .outlined { outline: 1px solid #cfe3ea; outline-offset: -1px; }
.chat { width: 36px; height: 30px; fill: #b2b2b2; }
.chat-olive { fill: #a5b06c; }
.chat text { fill: #fff; font: italic 600 12px "Open Sans", sans-serif; text-anchor: middle; }
.chat-gap { fill: none; stroke: #fff; }
.stars { width: 80px; height: 16px; fill: url(#starFill); overflow: visible; }
.stars-empty { fill: #f1f9fb; }

/* Footer */
.footer { padding: 44px 0 60px; }
.footer-row { display: flex; justify-content: space-between; align-items: flex-start; }
.footer-columns { display: grid; grid-template-columns: 161px 200px 161px auto; padding-top: 6px; }
h3 { font: 300 14px/20px "Open Sans", sans-serif; margin-bottom: 7px; }
.footer li { font: italic 12px/24px "Liberation Sans", sans-serif; color: #0fa0cf; }
.network-light { gap: 17px; }
.network-light .network-button { background: #08749b; color: #001c33; }
.network-light svg { width: 12px; height: 8px; }
.footnote { max-width: 636px; margin-top: 38px; font: italic 12px/17px "Liberation Sans", sans-serif; color: #215284; }
```
